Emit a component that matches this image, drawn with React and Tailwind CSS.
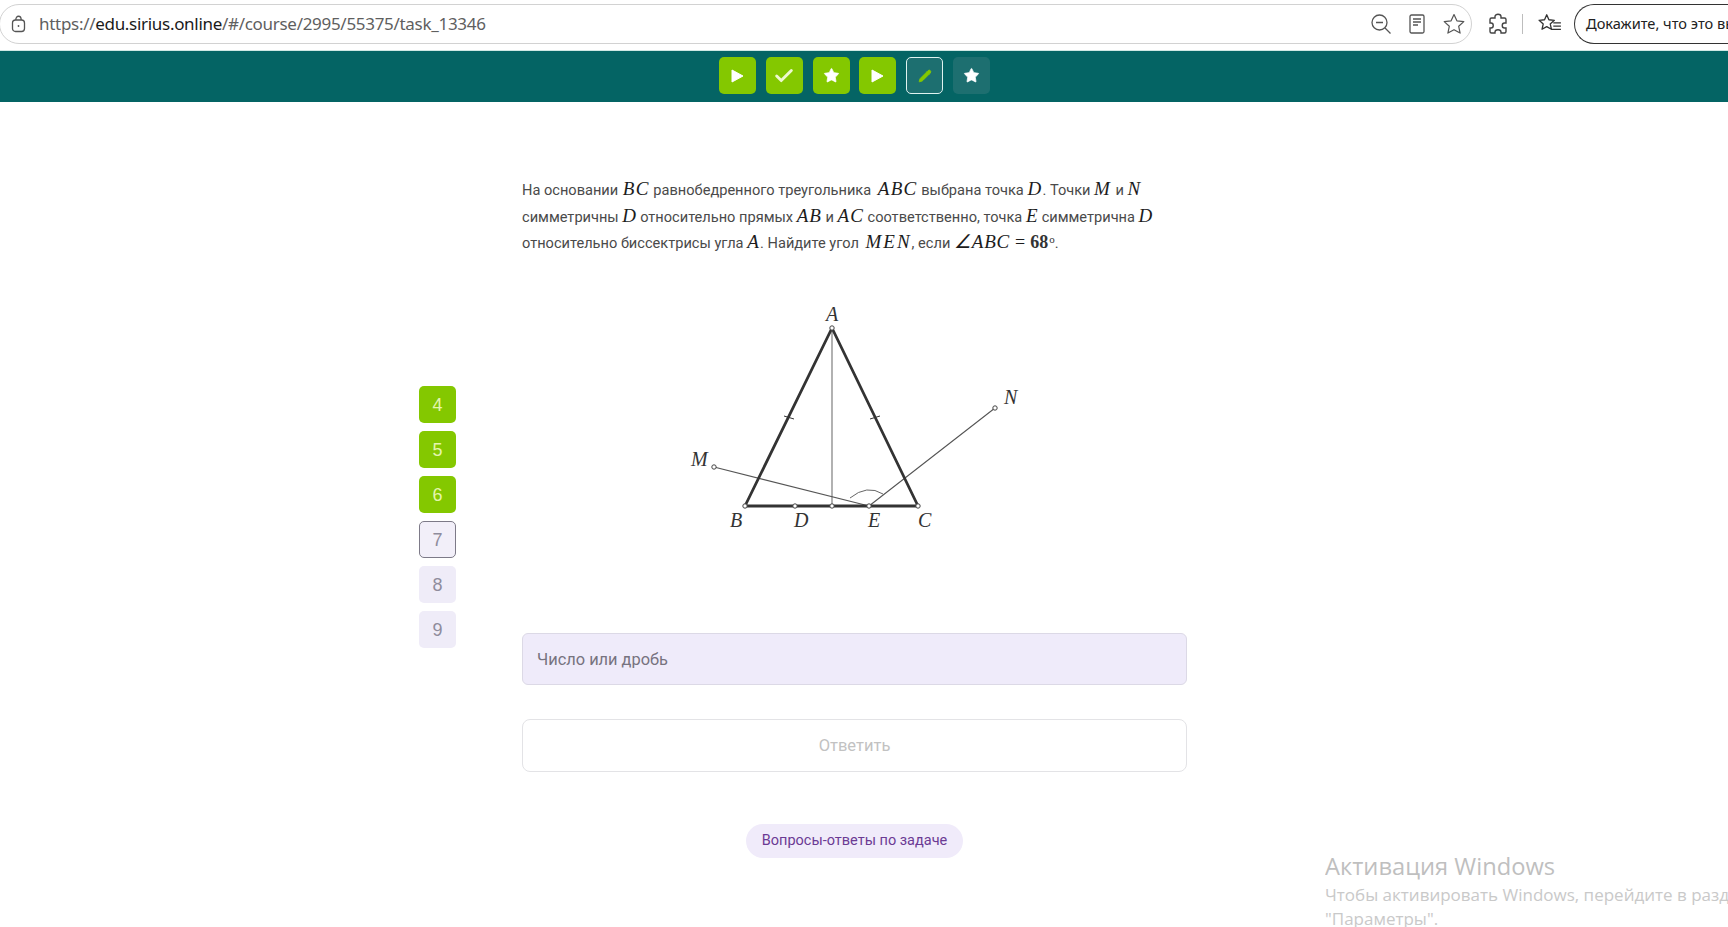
import { Check, Star, Pencil } from "lucide-react";

const M = ({ children, className = "tracking-[1.3px]" }) => (
  <span className={`font-['Liberation_Serif',serif] italic text-[19px] leading-none font-medium text-[#1c1c1c] ${className}`}>
    {children}
  </span>
);

const Solid = ({ type }) => {
  if (type === "play")
    return (
      <svg width="13" height="14" viewBox="0 0 13 14" fill="currentColor" stroke="currentColor" strokeWidth="1" strokeLinejoin="round">
        <path d="M1 1l11 6-11 6z" />
      </svg>
    );
  if (type === "check") return <Check className="w-[22px] h-[22px]" strokeWidth={3.2} />;
  if (type === "pencil") return <Pencil className="w-[14px] h-[14px]" fill="currentColor" strokeWidth={1.5} />;
  return <Star className="w-[17px] h-[17px]" fill="currentColor" strokeWidth={1} />;
};

const TOOLBAR = [
  { type: "play", cls: "bg-[#84c800] text-white" },
  { type: "check", cls: "bg-[#84c800] text-[#eef8cf]" },
  { type: "star", cls: "bg-[#84c800] text-white" },
  { type: "play", cls: "bg-[#84c800] text-white" },
  { type: "pencil", cls: "bg-[#1d6f70] text-[#84c800] border border-[#dff3f0]" },
  { type: "star", cls: "bg-[#1d6f70] text-white" },
];

const NAV = [
  { n: 4, cls: "bg-[#84c800] text-[#e4f5ae]" },
  { n: 5, cls: "bg-[#84c800] text-[#e4f5ae]" },
  { n: 6, cls: "bg-[#84c800] text-[#e4f5ae]" },
  { n: 7, cls: "bg-[#f2eff9] text-[#8f8c9c] border border-[#7d7a88]" },
  { n: 8, cls: "bg-[#efecf8] text-[#8f8c9c]" },
  { n: 9, cls: "bg-[#efecf8] text-[#8f8c9c]" },
];

function BrowserBar() {
  return (
    <div className="h-[50px] pb-[2px] flex items-center bg-white overflow-hidden font-['Noto_Sans',sans-serif]">
      <div className="w-[1473px] h-[40px] -ml-px shrink-0 flex items-center border border-[#d2d2d2] rounded-full pl-[11px] pr-[5px]">
        <svg width="16" height="18" viewBox="0 0 16 18" fill="none" stroke="#555" strokeWidth="1.3" className="shrink-0">
          <rect x="1.5" y="5" width="12" height="11.5" rx="3" />
          <path d="M4.8 5c0-5 5.4-5 5.4 0" />
          <circle cx="7.5" cy="11" r="0.9" fill="#555" stroke="none" />
        </svg>
        <div className="ml-[12px] text-[17px] whitespace-nowrap text-[#5f5f5f] tracking-[-0.3px]">
          https://<span className="text-[#1a1a1a]">edu.sirius.online</span>/#/course/2995/55375/task_13346
        </div>
        <div className="ml-auto flex items-center gap-[17px]">
          <svg width="22" height="22" viewBox="0 0 22 22" fill="none" stroke="#555" strokeWidth="1.3">
            <circle cx="9.5" cy="9.5" r="7.5" />
            <path d="M6 9.5h7M15 15l5.5 5.5" />
          </svg>
          <svg width="16" height="20" viewBox="0 0 16 20" fill="none" stroke="#555" strokeWidth="1.3">
            <rect x="1" y="1" width="14" height="18" rx="1.5" />
            <path d="M4 5h8M4 8h8M4 11h5" />
          </svg>
          <svg width="24" height="24" viewBox="0 0 24 24" fill="none" stroke="#555" strokeWidth="1.2" strokeLinejoin="round">
            <path d="M12 2.5l2.9 6.3 6.9.8-5.1 4.7 1.4 6.8-6.1-3.4-6.1 3.4 1.4-6.8-5.1-4.7 6.9-.8z" />
          </svg>
        </div>
      </div>
      <svg width="20" height="22" viewBox="0 0 20 22" fill="none" stroke="#444" strokeWidth="1.4" className="ml-[16px] shrink-0">
        <path d="M7 3.5c0-3 6-3 6 0v1.5h3.5c1 0 1.5.6 1.5 1.5V10h-1.5c-3 0-3 5 0 5H18v3.5c0 1-.6 1.5-1.5 1.5H13v-1c0-3-6-3-6 0v1H3.5c-1 0-1.5-.6-1.5-1.5V15h1c3 0 3-5 0-5H2V6.5C2 5.6 2.5 5 3.5 5H7z" />
      </svg>
      <div className="ml-[14px] w-px h-[20px] bg-[#bdbdbd] shrink-0" />
      <svg width="24" height="22" viewBox="0 0 22 20" fill="none" stroke="#333" strokeWidth="1.2" strokeLinejoin="round" className="ml-[15px] shrink-0">
        <path d="M8 1.5l2 4.6 5 .5-3.8 3.3 1.1 4.9L8 12.4l-4.3 2.4 1.1-4.9L1 6.6l5-.5z" />
        <path d="M14 9h7M14 12h7M12 15h9" />
      </svg>
      <div className="ml-[12px] h-[40px] pl-[11px] pr-4 shrink-0 flex items-center border border-[#333] rounded-l-full border-r-0 text-[14.6px] whitespace-nowrap text-[#222] w-[200px]">
        Докажите, что это вы
      </div>
    </div>
  );
}

function Figure() {
  const pts = [[832, 328], [745, 506], [795, 506], [832, 506], [869, 506], [918, 506], [714, 467], [995, 408]];
  const labels = [
    ["A", 826, 321], ["M", 691, 466], ["N", 1004, 404], ["B", 730, 527], ["D", 794, 527], ["E", 868, 527], ["C", 918, 527],
  ];
  return (
    <svg viewBox="522 296 665 244" className="w-[665px] h-[244px] block">
      <path d="M832 328V506" stroke="#888" strokeWidth="1.3" fill="none" />
      <path d="M714 467L869 506M869 506L995 408" stroke="#555" strokeWidth="1.1" fill="none" />
      <path d="M850 498Q867 484 883 494" stroke="#666" strokeWidth="1" fill="none" />
      <path d="M745 506L832 328L918 506Z" stroke="#333" strokeWidth="2.8" fill="none" strokeLinejoin="round" />
      <path d="M784 416l10 3M870 419l10-3" stroke="#333" strokeWidth="1" />
      {pts.map(([x, y]) => (
        <circle key={`${x}-${y}`} cx={x} cy={y} r="2.2" fill="white" stroke="#444" strokeWidth="1" />
      ))}
      {labels.map(([t, x, y]) => (
        <text key={t} x={x} y={y} fontFamily="Liberation Serif, serif" fontStyle="italic" fontSize="20" fill="#333">
          {t}
        </text>
      ))}
    </svg>
  );
}

export default function App() {
  return (
    <div className="w-full h-screen overflow-hidden relative bg-white font-['Roboto',sans-serif]">
      <BrowserBar />

      <div className="h-[52px] pb-[2px] bg-[#046464] border-t border-[#cfe8e4] flex items-center justify-center gap-[9.8px] pr-[19px]">
        {TOOLBAR.map((b, i) => (
          <div key={i} className={`w-[37px] h-[37px] rounded-[5px] flex items-center justify-center ${b.cls}`}>
            <Solid type={b.type} />
          </div>
        ))}
      </div>

      <div className="flex pl-[419px]">
        <div className="mt-[284px] w-[37px] flex flex-col gap-2">
          {NAV.map((b) => (
            <div
              key={b.n}
              className={`w-[37px] h-[37px] rounded-[5px] flex items-center justify-center pt-[1px] text-[18px] font-['Liberation_Sans',sans-serif] ${b.cls}`}
            >
              {b.n}
            </div>
          ))}
        </div>

        <div className="ml-[66px] w-[665px] pt-[75px]">
          <p className="text-[14.6px] leading-[26.5px] text-[#4a4a4a] whitespace-nowrap">
            На основании <M className="tracking-[1.3px] ml-[1px]">BC</M> равнобедренного треугольника <M className="tracking-[1.3px] ml-[3px]">ABC</M> выбрана точка <M>D</M>. Точки <M className="tracking-[2px]">M</M> и <M className="tracking-[3px]">N</M>
            <br />
            симметричны <M className="tracking-[0.5px]">D</M> относительно прямых <M className="tracking-[1px]">AB</M> и <M className="tracking-[1px]">AC</M> соответственно, точка <M className="tracking-[0.5px]">E</M> симметрична <M className="tracking-[0.5px]">D</M>
            <br />
            относительно биссектрисы угла <M>A</M>. Найдите угол <M className="tracking-[2px] ml-[3px]">MEN</M>, если <M className="tracking-[0.8px]">∠ABC</M>
            <span className="font-['Liberation_Serif',serif] text-[18px] leading-none text-[#1c1c1c] mx-[5px]">=</span>
            <span className="font-['Liberation_Serif',serif] font-bold text-[18px] leading-none text-[#333]">
              68<sup className="text-[11px] font-normal leading-none ml-[1px]">o</sup>
            </span>
            .
          </p>

          <div className="mt-[39px]">
            <Figure />
          </div>

          <input
            placeholder="Число или дробь"
            className="mt-[93px] block w-full h-[52px] pt-[2px] px-[14px] rounded-[6px] bg-[#efebfa] border border-[#dcd9e6] text-[16.4px] outline-none placeholder:text-[#77737f]"
          />

          <button
            disabled
            className="mt-[34px] block w-full h-[53px] pt-[2px] rounded-[8px] bg-white border border-[#e3e3e6] text-[16.5px] text-[#c2c2c2]"
          >
            Ответить
          </button>

          <div className="mt-[52px] flex justify-center">
            <div className="h-[34px] w-[217px] pt-[1px] rounded-full bg-[#f0ebfa] flex items-center justify-center text-[14.5px] text-[#6b3a94]">
              Вопросы-ответы по задаче
            </div>
          </div>
        </div>
      </div>

      <div className="absolute left-[1325px] top-[850px] w-[403px] overflow-hidden whitespace-nowrap font-['Open_Sans',sans-serif] text-[#c9c9c9]">
        <div className="text-[23.7px] leading-[33px] text-[#bfbfbf]">Активация Windows</div>
        <div className="text-[17px] leading-[24px]">Чтобы активировать Windows, перейдите в раздел</div>
        <div className="text-[17px] leading-[24px]">"Параметры".</div>
      </div>
    </div>
  );
}
